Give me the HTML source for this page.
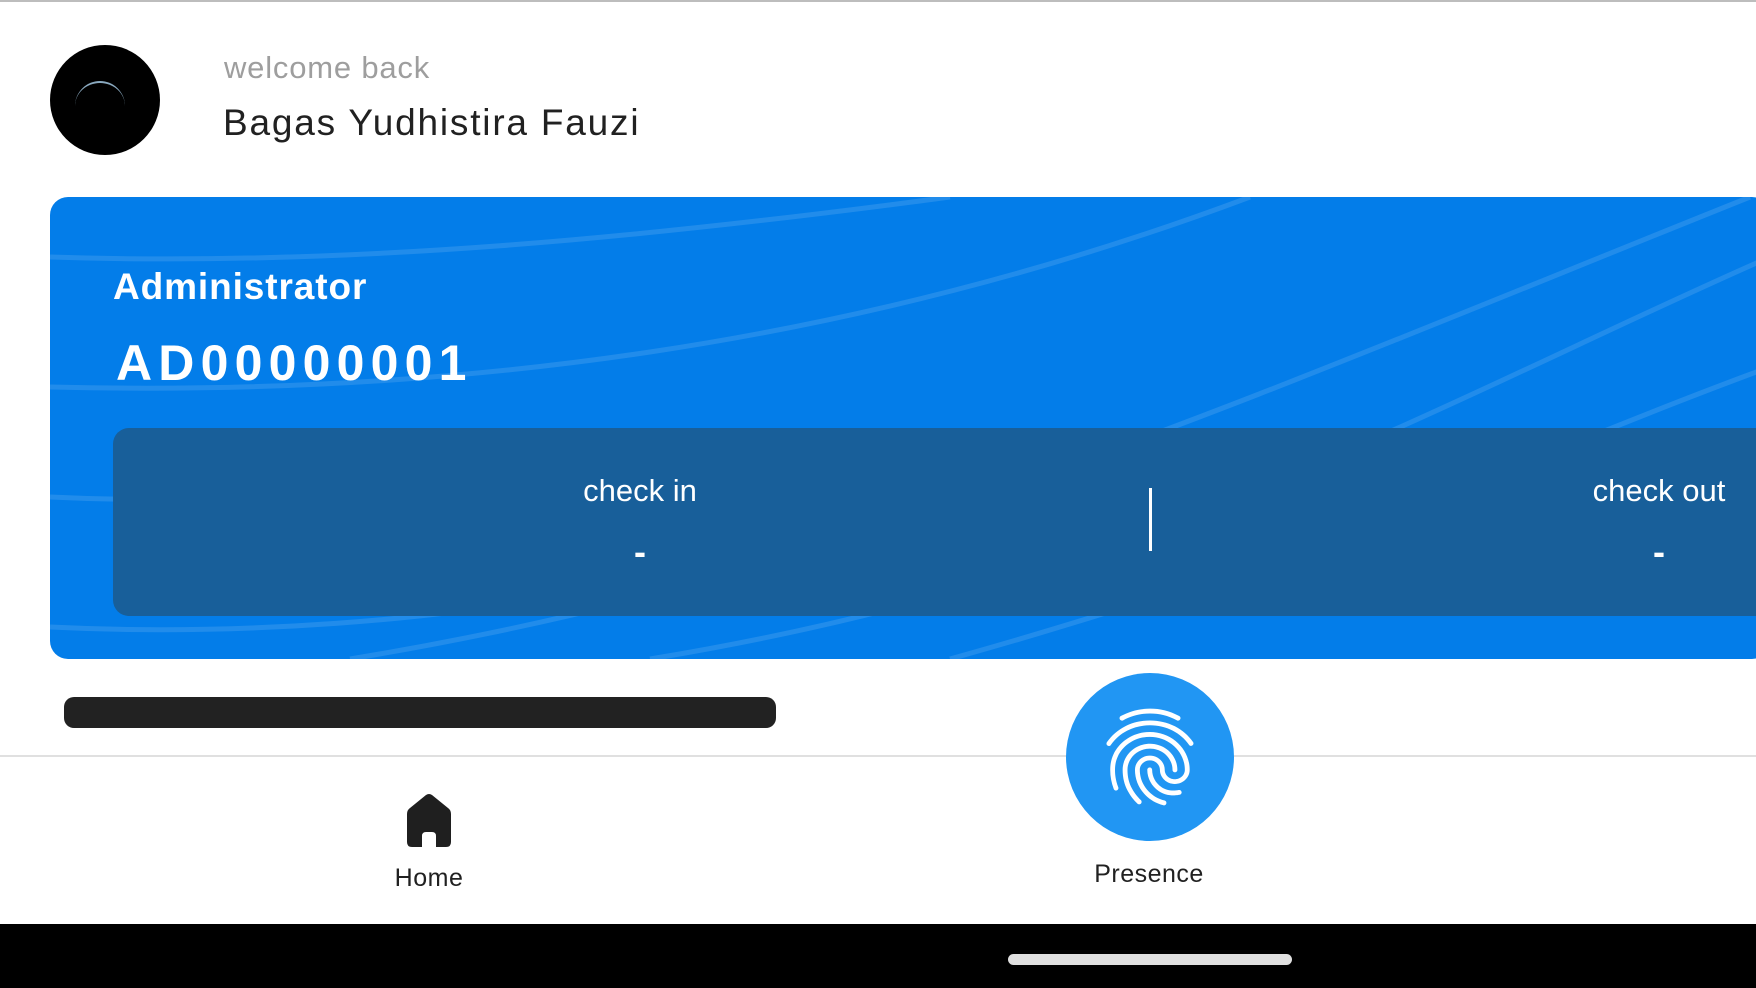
<!DOCTYPE html>
<html><head><meta charset="utf-8"><style>
*{margin:0;padding:0;box-sizing:border-box}
body{width:1756px;height:988px;overflow:hidden;background:#fff;font-family:"Liberation Sans",sans-serif;position:relative}
.abs{position:absolute}
</style></head><body>
<div class="abs" style="left:0;top:0;width:1756px;height:2px;background:#bdbdbd"></div>
<div class="abs" style="left:50px;top:45px;width:110px;height:110px;border-radius:50%;background:#000;overflow:hidden">
<div class="abs" style="left:25px;top:36px;width:50px;height:50px;border-radius:50%;border-top:2px solid #8aa9bf"></div></div>
<div class="abs" style="left:224px;top:50px;font-size:31px;color:#9e9e9e;letter-spacing:0.8px">welcome back</div>
<div class="abs" style="left:223px;top:102px;font-size:37px;color:#212121;letter-spacing:1.8px">Bagas Yudhistira Fauzi</div>

<div class="abs" style="left:50px;top:197px;width:1720px;height:462px;border-radius:18px;background:#037de9;overflow:hidden">
<svg class="abs" style="left:0;top:0" width="1720" height="462" fill="none" stroke="rgba(255,255,255,0.12)" stroke-width="5">
<path d="M0 60 C300 70 600 40 900 0"/><path d="M0 190 C400 200 800 150 1200 0"/><path d="M300 462 C800 380 1200 200 1700 0"/><path d="M600 462 C1100 380 1400 200 1720 60"/><path d="M900 462 C1300 350 1500 250 1720 170"/><path d="M0 300 C200 310 400 290 600 240"/><path d="M0 430 C200 440 400 420 500 400"/>
</svg>
<div class="abs" style="left:63px;top:69px;font-size:37px;color:#fff;font-weight:bold;letter-spacing:0.9px">Administrator</div>
<div class="abs" style="left:66px;top:137px;font-size:50px;color:#fff;font-weight:bold;letter-spacing:6.2px">AD00000001</div>
<div class="abs" style="left:63px;top:231px;width:1700px;height:188px;border-radius:16px;background:#185f9a">
<div class="abs" style="left:427px;top:45px;width:200px;text-align:center;font-size:31px;color:#fff">check in</div>
<div class="abs" style="left:427px;top:103px;width:200px;text-align:center;font-size:36px;color:#fff;font-weight:bold">-</div>
<div class="abs" style="left:1036px;top:60px;width:3px;height:63px;background:#fff"></div>
<div class="abs" style="left:1446px;top:45px;width:200px;text-align:center;font-size:31px;color:#fff">check out</div>
<div class="abs" style="left:1446px;top:103px;width:200px;text-align:center;font-size:36px;color:#fff;font-weight:bold">-</div>
</div></div>

<div class="abs" style="left:64px;top:697px;width:712px;height:31px;border-radius:10px;background:#222"></div>
<div class="abs" style="left:0;top:755px;width:1756px;height:2px;background:#e0e0e0"></div>
<div class="abs" style="left:1066px;top:673px;width:168px;height:168px;border-radius:50%;background:#2196f3"></div>
<svg class="abs" style="left:1092px;top:699px" width="116" height="116" viewBox="0 0 24 24" fill="#fff"><path d="M17.81 4.47c-.08 0-.16-.02-.23-.06C15.66 3.420 14 3 12.01 3c-1.98 0-3.860.47-5.570 1.41-.24.13-.54.04-.68-.2-.13-.24-.04-.55.2-.68C7.82 2.52 9.86 2 12.01 2c2.13 0 3.99.47 6.03 1.52.25.13.34.43.21.67-.09.18-.26.28-.44.28zM3.5 9.72c-.1 0-.2-.03-.29-.09-.23-.16-.28-.47-.12-.7.99-1.4 2.25-2.5 3.75-3.27C9.98 4.04 14 4.03 17.15 5.65c1.5.77 2.76 1.86 3.75 3.250.16.22.11.54-.12.7-.23.16-.54.11-.7-.12-.9-1.26-2.04-2.25-3.39-2.94-2.87-1.47-6.54-1.470-9.4.01-1.36.7-2.5 1.7-3.4 2.96-.08.14-.23.21-.39.21zm6.25 12.07c-.13 0-.26-.05-.35-.15-.87-.87-1.34-1.43-2.01-2.64-.69-1.23-1.05-2.73-1.05-4.34 0-2.97 2.54-5.39 5.66-5.39s5.66 2.42 5.66 5.39c0 .28-.22.5-.5.5s-.5-.22-.5-.5c0-2.42-2.09-4.39-4.66-4.39-2.57 0-4.66 1.97-4.66 4.39 0 1.44.32 2.77.93 3.850.64 1.15 1.08 1.64 1.85 2.42.19.2.19.51 0 .71-.11.1-.24.15-.37.15zm7.17-1.85c-1.19 0-2.24-.3-3.1-.89-1.49-1.01-2.38-2.65-2.38-4.39 0-.28.22-.5.5-.5s.5.22.5.5c0 1.41.72 2.74 1.94 3.560.71.48 1.54.71 2.54.71.24 0 .64-.03 1.04-.1.27-.05.53.13.58.41.05.27-.13.53-.41.58-.57.11-1.07.12-1.21.12zM14.91 22c-.04 0-.09-.01-.13-.02-1.59-.44-2.63-1.03-3.720-2.1-1.4-1.39-2.17-3.24-2.17-5.22 0-1.62 1.38-2.94 3.08-2.94 1.7 0 3.08 1.32 3.08 2.94 0 1.07.93 1.94 2.08 1.94s2.08-.87 2.08-1.94c0-3.77-3.25-6.83-7.25-6.83-2.84 0-5.44 1.58-6.61 4.03-.39.81-.59 1.76-.59 2.8 0 .78.07 2.01.67 3.61.1.26-.03.55-.29.64-.26.1-.55-.04-.64-.29-.49-1.31-.73-2.61-.73-3.96 0-1.2.23-2.29.68-3.24 1.33-2.79 4.28-4.6 7.51-4.6 4.55 0 8.250 3.51 8.25 7.83 0 1.62-1.38 2.94-3.080 2.94s-3.08-1.32-3.08-2.94c0-1.07-.93-1.940-2.08-1.94s-2.08.87-2.08 1.94c0 1.71.66 3.31 1.87 4.51.95.94 1.86 1.46 3.27 1.85.27.07.42.35.35.61-.05.23-.26.38-.47.38z"/></svg>
<svg class="abs" style="left:403px;top:792px" width="52" height="56" viewBox="0 0 52 56"><path fill="#1f1f1f" d="M4 22 Q4 18 7 16 L23 3 Q26 1 29 3 L45 16 Q48 18 48 22 L48 50 Q48 55 43 55 L33 55 L33 44 Q33 40 29 40 L23 40 Q19 40 19 44 L19 55 L9 55 Q4 55 4 50 Z"/></svg>
<div class="abs" style="left:329px;top:864px;width:200px;text-align:center;font-size:25px;color:#212121;letter-spacing:0.5px">Home</div>
<div class="abs" style="left:1049px;top:860px;width:200px;text-align:center;font-size:25px;color:#212121;letter-spacing:0.5px">Presence</div>
<div class="abs" style="left:0;top:924px;width:1756px;height:64px;background:#000"></div>
<div class="abs" style="left:1008px;top:954px;width:284px;height:11px;border-radius:6px;background:#e0e0e0"></div>
</body></html>
